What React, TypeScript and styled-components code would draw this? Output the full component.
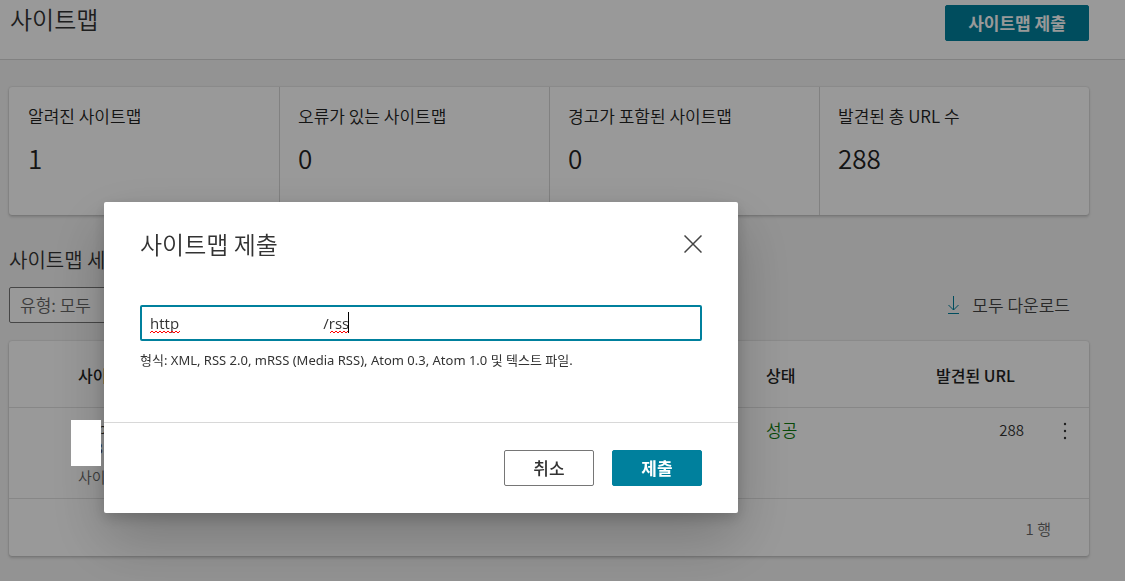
import React, { useState } from "react";
import styled, { createGlobalStyle } from "styled-components";

const teal = "#00809d";
const ink = "#333";

const GlobalStyle = createGlobalStyle`
  *, *::before, *::after { box-sizing: border-box; }
  body {
    margin: 0;
    background: #f5f5f5;
    color: ${ink};
    font-family: "Noto Sans CJK KR", sans-serif;
    font-size: 17px;
    font-weight: 350;
    line-height: 24px;
  }
  button, input, select { font: inherit; color: inherit; }
  h1, h2, p, dl, dt, dd { margin: 0; font-weight: 350; }
`;

const Page = styled.div`
  min-height: 100vh;
`;

const Header = styled.header`
  display: flex;
  align-items: flex-start;
  justify-content: space-between;
  padding: 5px 36px 18px 10px;
  background: #fff;
  border-bottom: 1px solid #d8d8d8;
`;

const PageTitle = styled.h1`
  font-size: 24px;
  line-height: 28px;
`;

const Button = styled.button<{ $primary?: boolean; $wide?: boolean }>`
  width: ${(p) => (p.$wide ? "144px" : "90px")};
  height: 36px;
  padding: 0;
  border: 1px solid ${(p) => (p.$primary ? teal : "#767676")};
  border-radius: 2px;
  background: ${(p) => (p.$primary ? teal : "#fff")};
  color: ${(p) => (p.$primary ? "#fff" : ink)};
  font-weight: ${(p) => (p.$primary ? 700 : 500)};
`;

const Content = styled.main`
  padding: 27px 36px 24px 9px;
`;

const Panel = styled.section`
  background: #fff;
  border-radius: 3px;
  box-shadow: 0 0 2px rgba(0, 0, 0, 0.2), 0 2px 3px rgba(0, 0, 0, 0.16);
`;

const Stats = styled.dl`
  display: grid;
  grid-template-columns: repeat(4, 1fr);
`;

const Stat = styled.div`
  height: 128px;
  padding: 17px 19px;
  color: #222;

  & + & {
    padding-left: 18px;
    border-left: 1px solid #d8d8d8;
  }
  dd {
    margin-top: 12px;
    font-size: 26px;
    line-height: 36px;
  }
`;

const SectionTitle = styled.h2`
  margin: 31px 0 13px;
  font-size: 20px;
  line-height: 28px;
`;

const Toolbar = styled.div`
  display: flex;
  align-items: center;
  justify-content: space-between;
  margin-bottom: 18px;
`;

const TypeSelect = styled.select`
  width: 216px;
  height: 36px;
  padding: 0 10px;
  appearance: none;
  border: 1px solid #767676;
  border-radius: 2px;
  background: #fff;
  color: #666;
`;

const Download = styled.button`
  display: flex;
  align-items: center;
  gap: 12px;
  padding: 0 19px;
  border: 0;
  background: none;
  color: #444;
`;

const Table = styled.table`
  width: 100%;
  table-layout: fixed;
  border-collapse: collapse;

  th, td {
    padding: 0;
    text-align: left;
    vertical-align: top;
    border-bottom: 1px solid #e2e2e2;
  }
  th {
    height: 66px;
    padding-top: 2px;
    vertical-align: middle;
    font-size: 16px;
    font-weight: 500;
    color: #222;
  }
  td {
    height: 91px;
    padding-top: 10px;
  }
  th:first-child, td:first-child {
    padding-left: 69px;
  }
`;

const StatusCol = styled.col`
  width: 150px;
`;
const CountCol = styled.col`
  width: 125px;
`;
const MenuCol = styled.col`
  width: 48px;
`;

const CountHead = styled.th`
  && {
    padding-right: 26px;
    text-align: right;
  }
`;

const CountCell = styled.td`
  && {
    padding-right: 17px;
    text-align: right;
    font-size: 15px;
  }
`;

const Success = styled.td`
  color: #107c10;
`;

const Entry = styled.div`
  position: relative;
  font-size: 15px;
  line-height: 20px;
`;

const EntryKind = styled.div`
  margin-top: 7px;
  font-size: 15px;
  line-height: 24px;
  color: #666;
`;

const Mask = styled.span`
  position: absolute;
  z-index: 3;
  left: -7px;
  top: 2px;
  width: 30px;
  height: 46px;
  background: #fff;
`;

const IconButton = styled.button`
  display: flex;
  align-items: center;
  justify-content: center;
  width: 100%;
  height: 26px;
  padding: 0;
  border: 0;
  background: none;
`;

const TableFooter = styled.div`
  padding: 18px 38px 15px;
  text-align: right;
  font-size: 15px;
  color: #666;
`;

const Overlay = styled.div`
  position: fixed;
  z-index: 2;
  inset: 0;
  padding: 202px 20px 20px 104px;
  background: rgba(0, 0, 0, 0.4);
`;

const Dialog = styled.div`
  max-width: 634px;
  background: #fff;
  border-radius: 2px;
  box-shadow: 0 26px 58px rgba(0, 0, 0, 0.22), 0 5px 14px rgba(0, 0, 0, 0.18);
`;

const DialogHead = styled.div`
  display: flex;
  align-items: center;
  justify-content: space-between;
  padding: 24px 36px 0;
`;

const DialogTitle = styled.h2`
  font-size: 24px;
  line-height: 36px;
`;

const CloseButton = styled.button`
  display: flex;
  padding: 0;
  border: 0;
  background: none;
`;

const DialogBody = styled.div`
  padding: 43px 36px 50px;
`;

const Field = styled.div`
  position: relative;
`;

const UrlInput = styled.input`
  display: block;
  width: 100%;
  height: 36px;
  padding: 0 8px;
  border: 2px solid ${teal};
  border-radius: 2px;
  outline: 0;
  background: #fff;
  font-family: "Open Sans", "Noto Sans CJK KR", sans-serif;
  font-size: 15px;
  font-weight: 400;
`;

const HostMask = styled.span`
  position: absolute;
  left: 40px;
  top: 4px;
  width: 140px;
  height: 28px;
  background: #fff;
`;

const SpellMarks = styled.svg`
  position: absolute;
  left: 10px;
  top: 6px;
  pointer-events: none;
`;

const Hint = styled.p`
  margin-top: 7px;
  font-family: "Noto Sans", "Noto Sans CJK KR", sans-serif;
  font-size: 13px;
  font-weight: 400;
`;

const DialogFoot = styled.div`
  display: flex;
  justify-content: flex-end;
  gap: 18px;
  padding: 27px 36px;
  border-top: 1px solid #d8d8d8;
`;

const stats = [
  { label: "알려진 사이트맵", value: 1 },
  { label: "오류가 있는 사이트맵", value: 0 },
  { label: "경고가 포함된 사이트맵", value: 0 },
  { label: "발견된 총 URL 수", value: 288 },
];

const wave = (from: number, to: number) => {
  let d = `M${from} 22`;
  for (let x = from + 2, up = true; x <= to; x += 2, up = !up) {
    d += `L${x} ${up ? 20 : 22}`;
  }
  return d;
};

const DownloadIcon = () => (
  <svg width="13" height="20" viewBox="0 0 13 20" fill="none" stroke={teal}>
    <path d="M6.5 1v14M1.5 10l5 5 5-5M1 18.5h11" />
  </svg>
);

const MoreIcon = () => (
  <svg width="4" height="18" viewBox="0 0 4 18" fill="#333">
    <circle cx="2" cy="2" r="1.2" />
    <circle cx="2" cy="9" r="1.2" />
    <circle cx="2" cy="16" r="1.2" />
  </svg>
);

const CloseIcon = () => (
  <svg width="18" height="18" viewBox="0 0 18 18" fill="none" stroke="#444" strokeWidth="1.5">
    <path d="M.5.5l17 17M17.5.5l-17 17" />
  </svg>
);

export default function App() {
  const [url, setUrl] = useState("http:" + "\u00a0".repeat(36) + "/rss");

  return (
    <>
      <GlobalStyle />
      <Page>
        <Header>
          <PageTitle>사이트맵</PageTitle>
          <Button $primary $wide>사이트맵 제출</Button>
        </Header>
        <Content>
          <Panel>
            <Stats>
              {stats.map((s) => (
                <Stat key={s.label}>
                  <dt>{s.label}</dt>
                  <dd>{s.value}</dd>
                </Stat>
              ))}
            </Stats>
          </Panel>
          <SectionTitle>사이트맵 세부 정보</SectionTitle>
          <Toolbar>
            <TypeSelect aria-label="유형">
              <option>유형: 모두</option>
            </TypeSelect>
            <Download>
              <DownloadIcon />
              모두 다운로드
            </Download>
          </Toolbar>
          <Panel>
            <Table>
              <colgroup>
                <col />
                <StatusCol />
                <CountCol />
                <MenuCol />
              </colgroup>
              <thead>
                <tr>
                  <th>사이트맵</th>
                  <th>상태</th>
                  <CountHead>발견된 URL</CountHead>
                  <th />
                </tr>
              </thead>
              <tbody>
                <tr>
                  <td>
                    <Entry>
                      http
                      <br />
                      288
                      <Mask />
                    </Entry>
                    <EntryKind>사이트맵</EntryKind>
                  </td>
                  <Success>성공</Success>
                  <CountCell>288</CountCell>
                  <td>
                    <IconButton aria-label="더 보기">
                      <MoreIcon />
                    </IconButton>
                  </td>
                </tr>
              </tbody>
            </Table>
            <TableFooter>1 행</TableFooter>
          </Panel>
        </Content>
      </Page>
      <Overlay>
        <Dialog role="dialog" aria-modal="true" aria-labelledby="submit-title">
          <DialogHead>
            <DialogTitle id="submit-title">사이트맵 제출</DialogTitle>
            <CloseButton aria-label="닫기">
              <CloseIcon />
            </CloseButton>
          </DialogHead>
          <DialogBody>
            <Field>
              <UrlInput
                aria-labelledby="submit-title"
                aria-describedby="submit-hint"
                spellCheck={false}
                value={url}
                onChange={(e) => setUrl(e.target.value)}
              />
              <HostMask />
              <SpellMarks width="210" height="24" fill="none" aria-hidden="true">
                <path d={wave(0, 30)} stroke="#f00" />
                <path d={wave(180, 198)} stroke="#f00" />
                <path d="M198.5 1v21" stroke="#000" />
              </SpellMarks>
            </Field>
            <Hint id="submit-hint">
              형식: XML, RSS 2.0, mRSS (Media RSS), Atom 0.3, Atom 1.0 및 텍스트 파일.
            </Hint>
          </DialogBody>
          <DialogFoot>
            <Button>취소</Button>
            <Button $primary>제출</Button>
          </DialogFoot>
        </Dialog>
      </Overlay>
    </>
  );
}
